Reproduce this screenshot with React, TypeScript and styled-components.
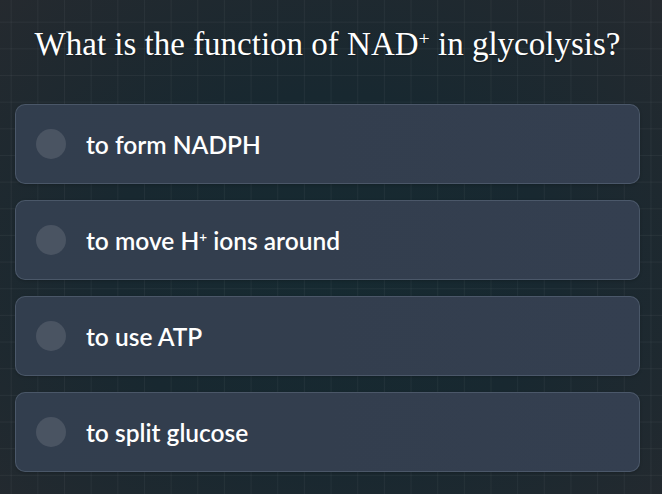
import React from "react";
import styled, { createGlobalStyle } from "styled-components";

const Global = createGlobalStyle`
  html, body { margin: 0; padding: 0; }
  body {
    width: 662px;
    height: 494px;
    overflow: hidden;
    background: #1d2529;
  }
`;

const Page = styled.div`
  position: relative;
  width: 662px;
  height: 494px;
  box-sizing: border-box;
  padding: 0 22px 0 15px;
  display: flex;
  flex-direction: column;
  background-color: #1b2429;
  background-image:
    linear-gradient(rgba(255, 255, 255, 0.045) 1px, transparent 1px),
    linear-gradient(90deg, rgba(255, 255, 255, 0.045) 1px, transparent 1px),
    radial-gradient(ellipse 75% 80% at 50% 55%, #162a31 0%, #182830 45%, #262a2f 100%);
  background-size: 26.67px 26.67px, 26.67px 26.67px, 100% 100%;
  background-position: 10.7px 21.7px, 10.7px 21.7px, 0 0;
`;

const Title = styled.h1`
  margin: 24px 0 0 0;
  font-family: "Liberation Serif", "Times New Roman", serif;
  font-weight: 400;
  font-size: 33px;
  line-height: 40px;
  color: #ffffff;
  text-align: center;
  text-shadow: 0 1px 2px rgba(0, 0, 0, 0.35);
`;

const Sup = styled.sup<{ $size: number; $raise: number }>`
  font-size: ${(p) => p.$size}em;
  vertical-align: ${(p) => p.$raise}em;
  line-height: 0;
`;

const Options = styled.div`
  margin-top: 40px;
  display: flex;
  flex-direction: column;
  gap: 16px;
`;

const Option = styled.div`
  height: 80px;
  box-sizing: border-box;
  display: flex;
  align-items: center;
  gap: 20px;
  padding-left: 20px;
  border-radius: 10px;
  border: 1px solid rgba(120, 135, 155, 0.35);
  background: linear-gradient(90deg, #323e4e 0%, #333e4e 50%, #343f50 100%);
  box-shadow: 0 1px 3px rgba(0, 0, 0, 0.2);
`;

const Radio = styled.span`
  width: 30px;
  height: 30px;
  border-radius: 50%;
  background: #4a5462;
  flex: none;
`;

const Label = styled.span`
  font-family: Lato, "Noto Sans", sans-serif;
  font-size: 24.5px;
  font-weight: 600;
  color: #ffffff;
`;

const options: React.ReactNode[] = [
  "to form NADPH",
  <>
    to move H<Sup $size={0.55} $raise={0.6}>+</Sup> ions around
  </>,
  "to use ATP",
  "to split glucose",
];

export default function App() {
  return (
    <>
      <Global />
      <Page>
        <Title>
          What is the function of NAD<Sup $size={0.6} $raise={0.5}>+</Sup> in glycolysis?
        </Title>
        <Options>
          {options.map((o, i) => (
            <Option key={i}>
              <Radio />
              <Label>{o}</Label>
            </Option>
          ))}
        </Options>
      </Page>
    </>
  );
}
